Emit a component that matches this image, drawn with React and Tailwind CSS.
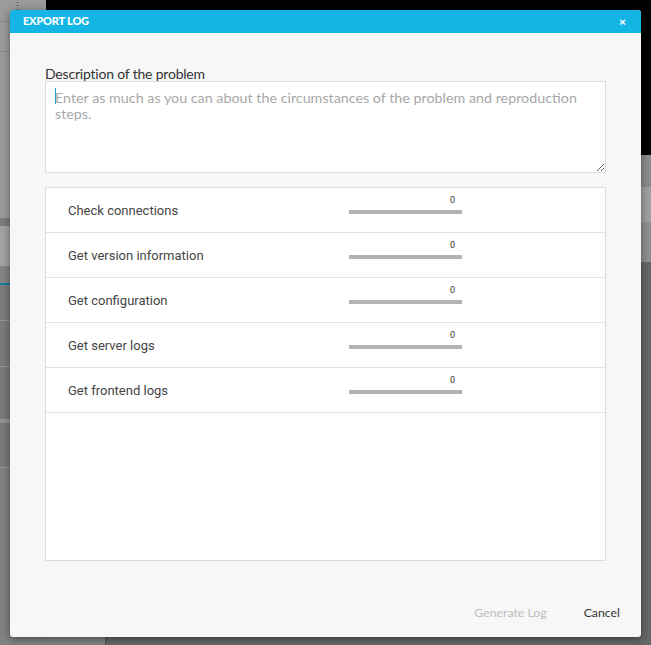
import React from 'react';

const steps = [
    'Check connections',
    'Get version information',
    'Get configuration',
    'Get server logs',
    'Get frontend logs',
];

function StepRow({ label, value }) {
    return (
        <div className="flex items-start h-[45px] border-b border-[#e3e3e3]">
            <div className="w-[303px] pl-[22px] pt-[15px] leading-[16px] text-[13px] text-[#444] font-['Roboto',sans-serif]">{label}</div>
            <div className="w-[113px] pt-[7px] flex flex-col items-end">
                <span className="text-[9px] leading-[10px] text-[#333] pr-[7px] font-['Roboto',sans-serif]">{value}</span>
                <div className="w-full h-[4px] mt-[5px] bg-[#b3b3b3]" />
            </div>
        </div>
    );
}

export default function App() {
    return (
        <div className="relative w-[651px] h-[645px] overflow-hidden bg-[#7a7a7a]">
            {/* dimmed app behind the dialog */}
            <div className="flex h-full">
                <div className="w-[46px] flex flex-col bg-[#9b9b9b]">
                    <div className="h-[22px] border-b border-[#888] text-[#333] text-[11px] leading-[12px] pl-[12px]">⋮</div>
                    <div className="h-[30px] border-b border-[#8c8c8c]" />
                    <div className="h-[166px]" />
                    <div className="h-[8px] bg-[#7e7e7e]" />
                    <div className="h-[40px] bg-[#a3a3a3]" />
                    <div className="h-[17px] bg-[#858585]" />
                    <div className="h-[2px] bg-[#167f98]" />
                    <div className="h-[36px] bg-[#7d7d7d] border-b border-[#959595]" />
                    <div className="h-[46px] bg-[#7b7b7b] border-b border-[#959595]" />
                    <div className="h-[52px] bg-[#7b7b7b]" />
                    <div className="h-[4px] bg-[#959595]" />
                    <div className="h-[45px] bg-[#7b7b7b] border-b border-[#959595]" />
                    <div className="flex-1 bg-[#828282]" />
                </div>
                <div className="flex-1 flex flex-col">
                    <div className="h-[155px] bg-black" />
                    <div className="h-[32px] bg-[#8c8c8c]" />
                    <div className="h-[35px] bg-[#a0a0a0]" />
                    <div className="h-[40px] bg-[#8f8f8f]" />
                    <div className="flex-1 flex">
                        <div className="w-[59px] bg-[#848484]" />
                        <div className="flex-1 bg-[#676767] border-l border-[#555]" />
                    </div>
                </div>
            </div>

            {/* dialog */}
            <div className="absolute left-[10px] top-[10px] w-[631px] h-[627px] rounded-[3px] bg-[#f7f7f7] shadow-[0_2px_8px_rgba(0,0,0,0.45)] flex flex-col overflow-hidden">
                <div className="h-[23px] bg-[#13b5e4] flex items-center justify-between pl-[13px] pr-[15px]">
                    <span className="text-white font-black text-[11px] tracking-[-0.2px] font-['Lato',sans-serif]">EXPORT LOG</span>
                    <span className="text-white font-black text-[12px] leading-none font-['Lato',sans-serif]">×</span>
                </div>

                <div className="flex-1 flex flex-col px-[35px] pt-[34px]">
                    <label className="text-[14px] leading-[14px] text-[#333] font-['Lato',sans-serif] tracking-[-0.2px]">Description of the problem</label>
                    <div className="relative">
                        <textarea
                            className="block w-[561px] h-[92px] border border-[#dcdcdc] bg-white px-[9px] pt-[8px] text-[14.3px] leading-[16px] text-[#333] placeholder-[#a8a8a8] font-['Lato',sans-serif] outline-none"
                            placeholder={'Enter as much as you can about the circumstances of the problem and reproduction\nsteps.'}
                        />
                        <span className="absolute left-[10px] top-[7px] w-[1px] h-[16px] bg-[#1aa5cf]" />
                    </div>

                    <div className="mt-[14px] w-[561px] h-[374px] bg-white border border-[#dcdcdc]">
                        {steps.map((s) => (
                            <StepRow key={s} label={s} value={0} />
                        ))}
                    </div>

                    <div className="flex justify-end items-center gap-[37px] mt-[43px] mr-[-14px] text-[12.3px] font-['Lato',sans-serif]">
                        <span className="text-[#bdbdbd]">Generate Log</span>
                        <span className="text-[#333]">Cancel</span>
                    </div>
                </div>
            </div>
        </div>
    );
}
